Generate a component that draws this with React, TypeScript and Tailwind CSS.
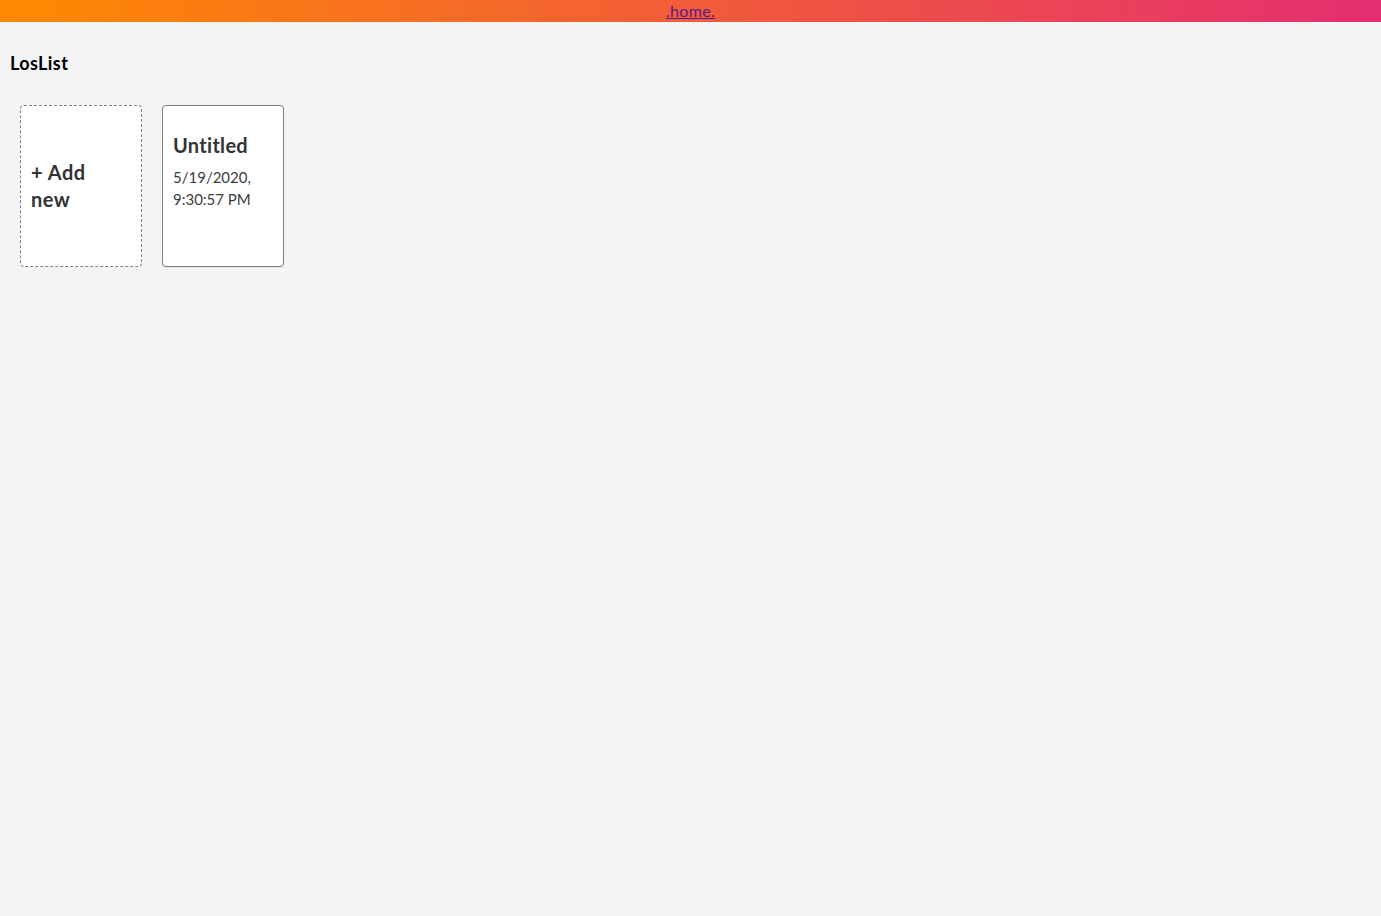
export default function App() {
  return (
    <div className="min-h-[916px] bg-[#f3f4f6] font-['Lato',sans-serif]">
      <div className="h-[22px] bg-[linear-gradient(to_right,#ff8a00,#e52e71)] flex justify-center">
        <a href="#" className="text-[#551a8b] underline text-[16px] leading-[22px] tracking-[0.3px]">.home.</a>
      </div>
      <div className="px-[10px]">
        <h2 className="text-[18px] font-bold text-black leading-[22px] pt-[30px] tracking-[0.4px]">LosList</h2>
        <div className="flex gap-[20px] pt-[31px] pl-[10px]">
          <div className="w-[122px] h-[162px] bg-white border border-dashed border-[#808080] rounded-[4px] px-[10px] flex items-center">
            <div className="w-[70px] text-[20px] font-bold leading-[27px] text-[#333] tracking-[0.5px]">+ Add new</div>
          </div>
          <div className="w-[122px] h-[162px] bg-white border border-[#808080] rounded-[4px] px-[10px] pt-[27px] shadow-[0_1px_1px_rgba(0,0,0,0.08)]">
            <div className="text-[20px] font-bold leading-[24px] text-[#333] tracking-[0.3px]">Untitled</div>
            <div className="mt-[9px] text-[15px] font-normal leading-[22px] text-[#3c3c3c]">5/19/2020, 9:30:57 PM</div>
          </div>
        </div>
      </div>
    </div>
  );
}
